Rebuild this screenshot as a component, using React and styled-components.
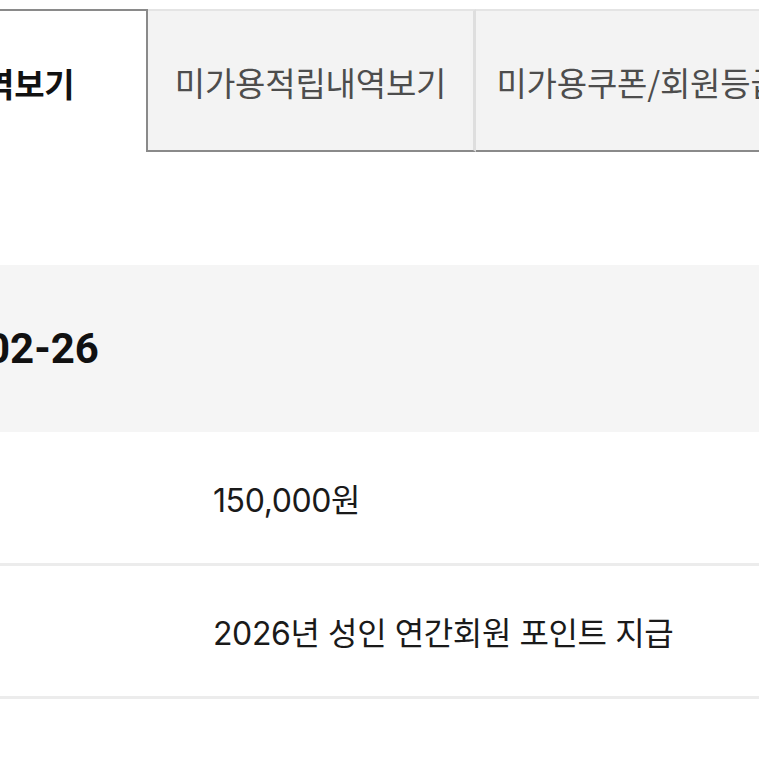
import React from 'react'
import styled, { createGlobalStyle } from 'styled-components'

const GlobalStyle = createGlobalStyle`
  html, body {
    margin: 0;
    padding: 0;
    background: #fff;
    overflow: hidden;
  }
  * {
    box-sizing: border-box;
  }
`

const Frame = styled.div`
  width: 759px;
  height: 759px;
  overflow: hidden;
  font-family: Inter, "Noto Sans CJK KR", sans-serif;
  color: #111;
`

// the visible area is a crop of a wider page
const Page = styled.div`
  width: 1000px;
  margin-left: -180px;
`

const TabBar = styled.div`
  display: flex;
  padding-top: 9px;
`

const Tab = styled.div`
  flex: 0 0 328px;
  height: 143px;
  display: flex;
  align-items: center;
  justify-content: center;
  padding-top: 3px;
  font-family: "Noto Sans CJK KR", sans-serif;
  font-size: 33px;
  letter-spacing: -0.2px;
  white-space: nowrap;
  background: ${p => (p.$active ? '#fff' : '#f3f3f3')};
  color: ${p => (p.$active ? '#111' : '#4d4d4d')};
  font-weight: ${p => (p.$active ? 700 : 400)};
  border-top: 2px solid ${p => (p.$active ? '#8a8a8a' : '#e4e4e4')};
  border-left: ${p => (p.$active ? '2px solid #8a8a8a' : 'none')};
  border-right: ${p => (p.$active ? '2px solid #8a8a8a' : '3px solid #dedede')};
  border-bottom: ${p => (p.$active ? 'none' : '2px solid #8a8a8a')};
`

const DateBand = styled.div`
  margin-top: 113px;
  height: 167px;
  background: #f5f5f5;
  display: flex;
  align-items: center;
  padding-left: 53px;
  font-family: Roboto, "Noto Sans CJK KR", sans-serif;
  font-size: 42px;
  font-weight: 700;
  color: #111;
`

const InfoRow = styled.div`
  display: grid;
  grid-template-columns: 393px 1fr;
  align-items: center;
  height: ${p => p.$height}px;
  border-bottom: 3px solid #ececec;
  font-size: 32px;
  letter-spacing: -0.4px;
`

const Label = styled.div`
  padding-left: 53px;
  color: #666;
  font-family: "Noto Sans CJK KR", sans-serif;
`

const Value = styled.div`
  color: #1a1a1a;
  white-space: nowrap;
`

const tabs = [
  { id: 1, label: '적립내역보기', active: true },
  { id: 2, label: '미가용적립내역보기' },
  { id: 3, label: '미가용쿠폰/회원등급' }
]

const rows = [
  { id: 'amount', label: '금액', value: '150,000원', height: 134 },
  { id: 'memo', label: '내용', value: '2026년 성인 연간회원 포인트 지급', height: 133 }
]

export default function App () {
  return (
    <Frame>
      <GlobalStyle />
      <Page>
        <TabBar>
          {tabs.map(tab =>
            <Tab key={tab.id} $active={tab.active}>{tab.label}</Tab>
          )}
        </TabBar>
        <DateBand>2026-02-26</DateBand>
        {rows.map(row =>
          <InfoRow key={row.id} $height={row.height}>
            <Label>{row.label}</Label>
            <Value>{row.value}</Value>
          </InfoRow>
        )}
      </Page>
    </Frame>
  )
}
